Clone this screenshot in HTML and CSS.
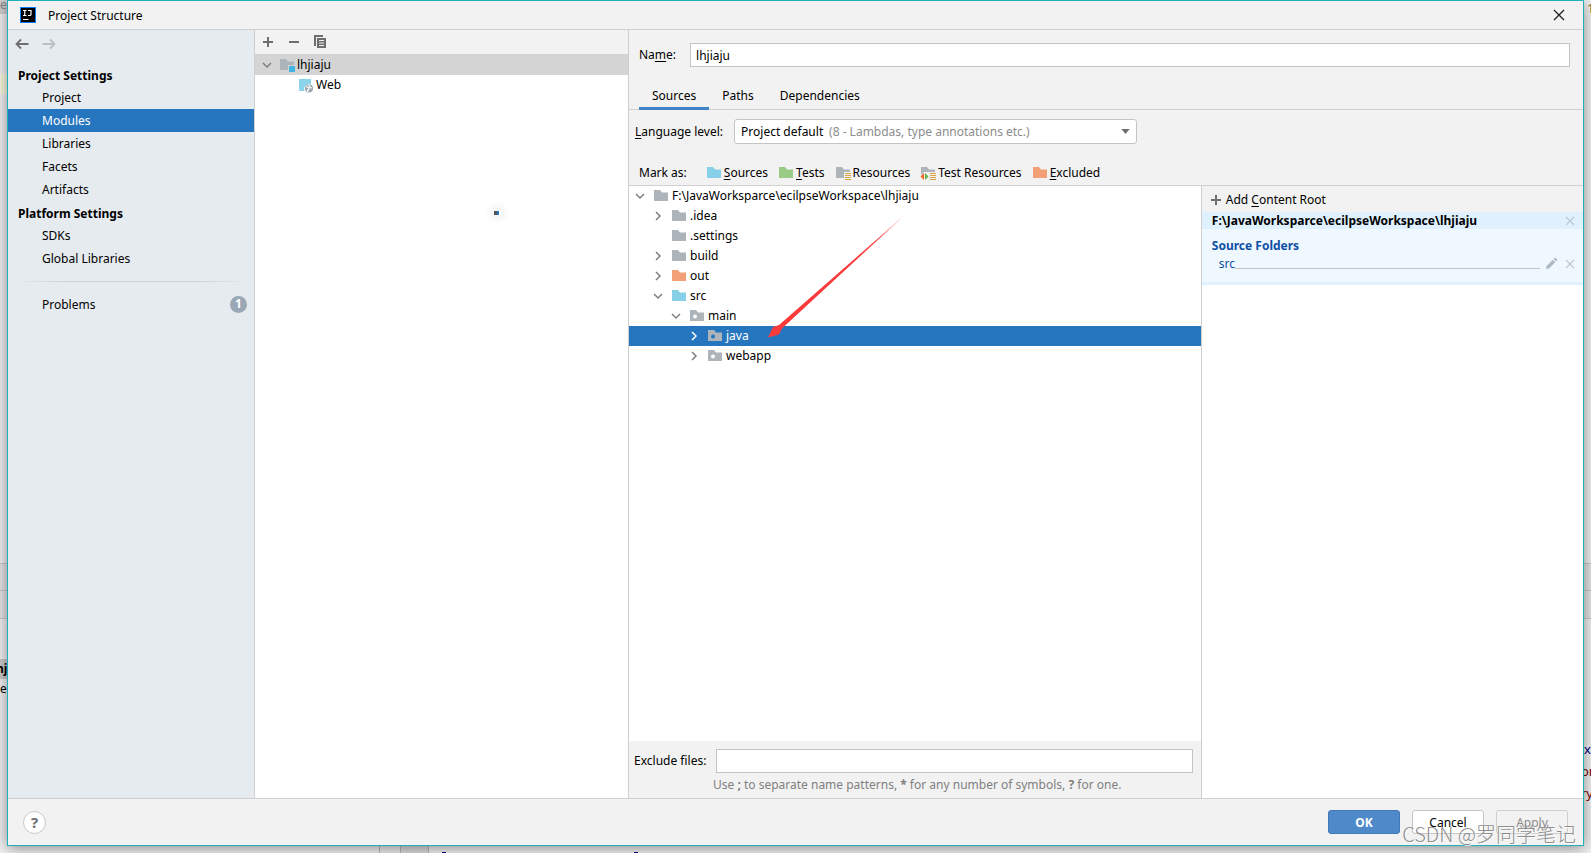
FILE: index.html
```html
<!DOCTYPE html>
<html lang="en">
<head>
<meta charset="utf-8">
<title>Project Structure</title>
<link rel="stylesheet" href="styles.css">
</head>
<body>
<svg width="0" height="0" class="defs" aria-hidden="true">
  <symbol id="folder" viewBox="0 0 16 16"><path d="M1 2h6l2 2.500h6V13H1z" fill="currentColor"/></symbol>
  <symbol id="down" viewBox="0 0 16 16"><path d="M4 6l4 4 4-4" fill="none" stroke="currentColor" stroke-width="1.500"/></symbol>
  <symbol id="right" viewBox="0 0 16 16"><path d="M6 4l4 4-4 4" fill="none" stroke="currentColor" stroke-width="1.500"/></symbol>
  <symbol id="plus" viewBox="0 0 16 16"><path d="M7 3h2v4h4v2H9v4H7V9H3V7h4z" fill="#6e6e6e"/></symbol>
  <symbol id="cross" viewBox="0 0 16 16"><path d="m4 4 8 8M12 4l-8 8" fill="none" stroke="currentColor" stroke-width="1.200"/></symbol>
  <symbol id="lines" viewBox="0 0 16 16"><path d="M10 8h6v1h-6zM10 10h6v1h-6zM10 12h6v1h-6zM10 14h6v1h-6z" fill="#d9a343"/></symbol>
</svg>
<div class="desktop">
  <div class="backdrop" aria-hidden="true">
    <div class="strip tab-strip">e</div>
    <div class="strip line-strip"></div>
    <div class="strip bar-strip"></div>
    <div class="strip node-strip">hj</div>
    <div class="strip ext-strip">e:</div>
    <div class="gutter"></div>
    <i class="quote first"></i><i class="quote second"></i>
    <span class="code top">1</span>
    <span class="code blue">x</span>
    <span class="code red">or</span>
    <span class="code red low">ry</span>
  </div>

  <main class="dialog">
    <header class="titlebar">
      <svg class="logo" viewBox="0 0 16 16"><path d="M0 0h16v16H0z" fill="#087cfa"/><path d="M1 1h14v14H1z" fill="#000"/><path d="M3 3.500h3.500M4.750 3.500v5M3 8.500h3.500M8 3.500h3v3.700q0 1.300-1.300 1.300H8M3 12.500h5.500" stroke="#fff" stroke-width="1.200" fill="none"/></svg>
      <h1>Project Structure</h1>
      <button class="close" aria-label="Close"><svg viewBox="0 0 16 16"><path d="m3 3 10 10M13 3 3 13" stroke="#222" stroke-width="1.300"/></svg></button>
    </header>

    <div class="body">
      <nav class="sidebar">
        <div class="history">
          <button aria-label="Back"><svg viewBox="0 0 16 16"><path d="M14.500 8H2.500M7 3.500 2.500 8 7 12.500" stroke="#6e6e6e" stroke-width="1.800" fill="none"/></svg></button>
          <button aria-label="Forward" disabled><svg viewBox="0 0 16 16"><path d="M1.500 8h12M9 3.500 13.500 8 9 12.500" stroke="#bcc0c3" stroke-width="1.800" fill="none"/></svg></button>
        </div>
        <h2>Project Settings</h2>
        <a href="#project">Project</a>
        <a href="#modules" class="selected" aria-current="page">Modules</a>
        <a href="#libraries">Libraries</a>
        <a href="#facets">Facets</a>
        <a href="#artifacts">Artifacts</a>
        <h2>Platform Settings</h2>
        <a href="#sdks">SDKs</a>
        <a href="#global">Global Libraries</a>
        <hr>
        <a href="#problems">Problems <span class="count">1</span></a>
      </nav>

      <section class="modules">
        <div class="toolbar">
          <button aria-label="Add"><svg><use href="#plus"/></svg></button>
          <button aria-label="Remove"><svg viewBox="0 0 16 16"><path d="M3 7h10v2H3z" fill="#6e6e6e"/></svg></button>
          <button aria-label="Copy"><svg viewBox="0 0 16 16"><path d="M2 1h9v2H4v9H2z" fill="#6e6e6e"/><path d="M5 4h9v10H5zM7 6v1h5V6zm0 2.500v1h5v-1zM7 11v1h5v-1z" fill="#6e6e6e" fill-rule="evenodd"/></svg></button>
        </div>
        <ul class="module-tree" role="tree">
          <li class="module selected" role="treeitem"><svg class="chevron"><use href="#down"/></svg><svg class="icon gray" viewBox="0 0 16 16"><path d="M1 2h6l2 2.500h6V8H9v5H1z" fill="currentColor"/><path d="M10 9h6v6h-6z" fill="#40b6e0"/></svg>lhjiaju</li>
          <li class="module child" role="treeitem"><svg class="icon" viewBox="0 0 16 16"><path d="M1 2h12v5.500A5 5 0 0 0 6.500 14H1z" fill="#8ad4ec"/><circle cx="11" cy="11.500" r="4" fill="#9aa7b0"/><path d="M8 9.500l2.500 1 .5 1.500-1.500 1.500v1.500M11 8l1 2.500 2 .5" stroke="#fff" stroke-width="1.200" fill="none"/></svg>Web</li>
        </ul>
        <i class="busy" aria-hidden="true"></i>
      </section>

      <section class="editor">
        <div class="name-row">
          <label for="name">Na<u>m</u>e:</label>
          <input id="name" type="text" value="lhjiaju">
        </div>
        <div class="tabs" role="tablist">
          <button role="tab" class="active" aria-selected="true">Sources</button>
          <button role="tab">Paths</button>
          <button role="tab">Dependencies</button>
        </div>
        <div class="level-row">
          <label for="level"><u>L</u>anguage level:</label>
          <div class="combo">
            <select id="level"><option>Project default</option></select>
            <span class="combo-hint">(8 - Lambdas, type annotations etc.)</span>
            <svg class="arrow" viewBox="0 0 10 6"><path d="M0 0h10L5 6z" fill="#6e6e6e"/></svg>
          </div>
        </div>
        <div class="mark-row">
          <span class="mark-label">Mark as:</span>
          <button><svg class="icon sky"><use href="#folder"/></svg><span><u>S</u>ources</span></button>
          <button><svg class="icon green"><use href="#folder"/></svg><span><u>T</u>ests</span></button>
          <button><svg class="icon gray" viewBox="0 0 16 16"><path d="M1 2h6l2 2.500h6V7H9v6H1z" fill="currentColor"/><use href="#lines"/></svg><span>Resources</span></button>
          <button><svg class="icon gray" viewBox="0 0 16 16"><path d="M1 2h6l2 2.500h6V7H4L1 10z" fill="currentColor"/><use href="#lines"/><path d="M4 8v7L.5 11.500z" fill="#f26522"/><path d="M5 8v7l3.500-3.500z" fill="#62b543"/></svg><span>Test Resources</span></button>
          <button><svg class="icon orange"><use href="#folder"/></svg><span><u>E</u>xcluded</span></button>
        </div>

        <div class="split">
          <div class="files">
            <ul class="tree" role="tree">
              <li class="d0"><svg class="chevron"><use href="#down"/></svg><svg class="icon gray"><use href="#folder"/></svg>F:\JavaWorksparce\ecilpseWorkspace\lhjiaju</li>
              <li class="d1"><svg class="chevron"><use href="#right"/></svg><svg class="icon gray"><use href="#folder"/></svg>.idea</li>
              <li class="d1"><svg class="chevron"></svg><svg class="icon gray"><use href="#folder"/></svg>.settings</li>
              <li class="d1"><svg class="chevron"><use href="#right"/></svg><svg class="icon gray"><use href="#folder"/></svg>build</li>
              <li class="d1"><svg class="chevron"><use href="#right"/></svg><svg class="icon orange"><use href="#folder"/></svg>out</li>
              <li class="d1"><svg class="chevron"><use href="#down"/></svg><svg class="icon sky"><use href="#folder"/></svg>src</li>
              <li class="d2"><svg class="chevron"><use href="#down"/></svg><svg class="icon gray" viewBox="0 0 16 16"><use href="#folder"/><circle cx="6" cy="8.500" r="2" fill="#fff"/></svg>main</li>
              <li class="d3 selected"><svg class="chevron"><use href="#right"/></svg><svg class="icon gray" viewBox="0 0 16 16"><use href="#folder"/><circle cx="6" cy="8.500" r="2" fill="#2675bf"/></svg>java</li>
              <li class="d3"><svg class="chevron"><use href="#right"/></svg><svg class="icon gray" viewBox="0 0 16 16"><use href="#folder"/><circle cx="6" cy="8.500" r="2" fill="#fff"/></svg>webapp</li>
            </ul>
            <svg class="pointer" viewBox="0 0 140 126" aria-hidden="true"><defs><linearGradient id="fade" x1="1" y1="0" x2="0" y2="1"><stop offset="0" stop-color="#fb3b3b" stop-opacity=".3"/><stop offset=".2" stop-color="#fb3b3b"/></linearGradient></defs><path d="M139 0 14 115.500 11 121.500 0 124.500 5 114 11 112z" fill="url(#fade)"/></svg>
            <div class="exclude">
              <div class="exclude-row">
                <label for="exclude">Exclude files:</label>
                <input id="exclude" type="text">
              </div>
              <p>Use <b>;</b> to separate name patterns, <b>*</b> for any number of symbols, <b>?</b> for one.</p>
            </div>
          </div>
          <aside class="roots">
            <button class="add-root"><svg><use href="#plus"/></svg><span>Add <u>C</u>ontent Root</span></button>
            <div class="root-path"><b>F:\JavaWorksparce\ecilpseWorkspace\lhjiaju</b><button aria-label="Remove root"><svg><use href="#cross"/></svg></button></div>
            <div class="root-body">
              <h3>Source Folders</h3>
              <div class="source"><a href="#src">src</a><span class="rule"></span><button aria-label="Edit"><svg viewBox="0 0 16 16"><path d="m3 13 .5-3L9.800 3.700l2.500 2.500L6 12.500zM10.600 2.900l1-1q.6-.5 1.200 0l1.300 1.300q.5.6 0 1.200l-1 1z" fill="#b0bac3"/></svg></button><button aria-label="Remove folder"><svg><use href="#cross"/></svg></button></div>
            </div>
          </aside>
        </div>
      </section>
    </div>

    <footer class="footer">
      <button class="help" aria-label="Help">?</button>
      <button class="btn primary">OK</button>
      <button class="btn">Cancel</button>
      <button class="btn" disabled>Apply</button>
    </footer>
  </main>
  <div class="watermark">CSDN @罗同学笔记</div>
</div>
</body>
</html>
```

FILE: styles.css
```css
* { box-sizing: border-box; }
body, h1, h2, h3, p, ul { margin: 0; padding: 0; }
body, button, input, select {
  font-family: "Noto Sans", "Open Sans", "Noto Sans CJK SC", sans-serif;
  font-size: 12px;
  line-height: 16px;
  color: #000;
}
h1, h2, h3 { font-size: 12px; line-height: 16px; }
button { background: none; border: 0; padding: 0; }
a { color: inherit; text-decoration: none; }
u { text-underline-offset: 2px; }
svg { display: block; width: 16px; height: 16px; flex: none; }
.defs { position: absolute; width: 0; height: 0; }
ul { list-style: none; }
input { border: 1px solid #c4c4c4; background: #fff; height: 24px; padding: 0 5px; outline: 0; min-width: 0; flex: 1; }

.desktop { position: relative; height: 100vh; padding: 0 7px 7px; display: flex; overflow: hidden; background: #f2f2f2; }
.backdrop { position: absolute; inset: 0; }
.strip { position: absolute; left: 0; right: 0; }
.tab-strip { top: 0; height: 14px; width: 7px; background: #d0d0d0; color: #888; line-height: 9px; }
.line-strip { top: 74px; height: 20px; width: 7px; background: #fcfae0; }
.bar-strip { top: 563px; height: 56px; border: 1px solid #c9c9c9; border-width: 1px 0; background: linear-gradient(#e6e6e6 26px, #c9c9c9 26px 27px, #e6e6e6 27px); }
.node-strip { top: 659px; height: 20px; width: 8px; background: #ccc; font-weight: bold; text-indent: -4px; line-height: 20px; }
.ext-strip { top: 681px; width: 8px; overflow: hidden; }
.gutter { position: absolute; left: 379px; width: 50px; bottom: 0; height: 8px; border: 1px solid #b9b9b9; border-width: 0 1px; background: linear-gradient(90deg, #eee 20px, #b9b9b9 20px 21px, #ddd 21px); }
.quote { position: absolute; bottom: 0; width: 4px; height: 1px; background: #000080; }
.quote.first { left: 442px; }
.quote.second { left: 634px; }
.code { position: absolute; right: 0; width: 7px; overflow: hidden; font-size: 13px; }
.code.top { top: 0; width: 4px; color: #a86a24; }
.code.blue { top: 741px; color: #000080; }
.code.red { top: 763px; color: #7d0000; text-indent: -3px; }
.code.low { top: 785px; }

.dialog { position: relative; flex: 1; display: flex; flex-direction: column; border: 1px solid #1fb0bd; background: #f2f2f2; box-shadow: 0 2px 14px rgba(0, 0, 0, .45); min-width: 0; }
.titlebar { display: flex; align-items: center; height: 29px; padding: 0 16px 0 12px; border-bottom: 1px solid #d1d1d1; }
.titlebar h1 { flex: 1; margin-left: 12px; padding-top: 2px; font-weight: normal; }
.body { flex: 1; display: flex; min-height: 0; }

.sidebar { width: 247px; background: #e6ebef; border-right: 1px solid #cfcfcf; }
.history { display: flex; gap: 11px; padding: 6px 0 11px 6px; }
.sidebar h2 { padding: 5px 10px 2px; }
.sidebar a { display: flex; align-items: center; height: 23px; padding: 0 7px 0 34px; }
.sidebar .selected { background: #2675bf; color: #fff; }
.sidebar hr { height: 1px; margin: 11px 6px; border: 0; background: linear-gradient(90deg, transparent, #d0d3d6 20%, #d0d3d6 80%, transparent); }
.count { margin-left: auto; width: 17px; height: 17px; border-radius: 50%; background: #9aa7b4; color: #fff; font-weight: bold; text-align: center; }

.modules { position: relative; width: 374px; background: #fff; border-right: 1px solid #cfcfcf; }
.toolbar { display: flex; gap: 10px; height: 24px; padding: 4px 5px; background: #f2f2f2; }
.module { display: flex; align-items: center; height: 20px; padding-left: 4px; }
.module.selected { height: 21px; background: #d4d4d4; }
.module .icon, .tree .icon { margin: 0 2px; }
.module.selected .icon { margin-left: 4px; }
.module.child { padding-left: 41px; }
.busy { position: absolute; left: 239px; top: 181px; width: 7px; height: 4px; background: linear-gradient(90deg, #555 3px, #2675bf 3px 5px, #fff 5px); box-shadow: 0 0 8px 3px rgba(0, 0, 0, .08); }
.chevron { color: #7f7f7f; }
.gray { color: #adb5bb; }
.sky { color: #87d0e8; }
.green { color: #9acb86; }
.orange { color: #f4a077; }

.editor { flex: 1; display: flex; flex-direction: column; min-width: 0; }
.name-row { display: flex; align-items: center; gap: 14px; padding: 13px 13px 0 10px; }
.tabs { display: flex; height: 43px; padding-left: 10px; border-bottom: 1px solid #d1d1d1; align-items: flex-end; }
.tabs button { height: 28px; padding: 6px 13px 3px; border-bottom: 3px solid transparent; margin-bottom: -1px; }
.tabs .active { border-bottom-color: #4083c9; }
.level-row { display: flex; align-items: center; gap: 11px; padding: 9px 6px 0; }
.combo { position: relative; display: flex; align-items: center; width: 403px; height: 25px; border: 1px solid #c4c4c4; border-radius: 3px; background: #fff; }
.combo select { appearance: none; width: 100%; height: 23px; border: 0; padding: 0 6px; background: none; }
.combo-hint { position: absolute; left: 94px; color: #8c8c8c; pointer-events: none; }
.arrow { position: absolute; right: 6px; width: 9px; height: 5px; pointer-events: none; }
.mark-row { display: flex; align-items: center; gap: 10px; height: 42px; padding: 16px 10px 0; border-bottom: 1px solid #d1d1d1; }
.mark-label { margin-right: 9px; }
.mark-row button { display: flex; align-items: center; gap: 2px; }

.split { flex: 1; display: flex; min-height: 0; background: #fff; }
.files { position: relative; flex: 3; display: flex; flex-direction: column; border-right: 1px solid #cfcfcf; }
.tree { flex: 1; }
.tree li { display: flex; align-items: center; height: 20px; padding-left: 3px; }
.tree .icon { margin: 0 3px 0 5px; }
.tree .d1 { padding-left: 21px; }
.tree .d2 { padding-left: 39px; }
.tree .d3 { padding-left: 57px; }
.tree .selected, .tree .selected .chevron { background: #2675bf; color: #fff; }
.pointer { position: absolute; left: 139px; top: 27px; width: 140px; height: 126px; }
.exclude { background: #f2f2f2; padding: 8px 8px 5px 5px; }
.exclude-row { display: flex; align-items: center; gap: 10px; }
.exclude p { padding: 4px 0 0 79px; color: #808080; }
.roots { flex: 2; min-width: 0; }
.add-root { display: flex; align-items: center; gap: 2px; width: 100%; height: 26px; padding: 1px 0 0 6px; background: #f2f2f2; }
.root-path { display: flex; align-items: center; justify-content: space-between; height: 17px; padding: 0 5px 0 10px; background: #dff1ff; }
.roots svg { color: #bfc8d0; }
.root-body { height: 56px; padding: 9px 5px 0 10px; background: #f0f8ff; border-bottom: 3px solid #dff1ff; color: #0d4fa6; }
.source { display: flex; align-items: center; padding-left: 7px; gap: 3px; height: 20px; }
.source a { margin-right: -3px; }
.rule { flex: 1; height: 1px; margin-top: 9px; background: #c4c4c4; }

.footer { display: flex; align-items: center; gap: 12px; height: 47px; padding: 0 15px; border-top: 1px solid #cfcfcf; }
.help { width: 23px; height: 23px; margin-right: auto; border: 1px solid #c8c8c8; border-radius: 50%; background: #fff; color: #6e6e6e; font-size: 15px; font-weight: bold; }
.btn { width: 72px; height: 24px; padding-top: 2px; border: 1px solid #c4c4c4; border-radius: 3px; background: #fff; }
.btn.primary { border-color: #4579b6; background: #4e8ac9; color: #fff; font-weight: bold; }
.btn:disabled { background: none; color: #8c8c8c; border-color: #cfcfcf; }
.watermark { position: absolute; right: 15px; bottom: 6px; font: 300 20px/26px "Noto Sans CJK SC", sans-serif; color: rgba(130, 130, 130, .9); text-shadow: 1px 1px 0 rgba(255, 255, 255, .7); pointer-events: none; white-space: nowrap; }
```
